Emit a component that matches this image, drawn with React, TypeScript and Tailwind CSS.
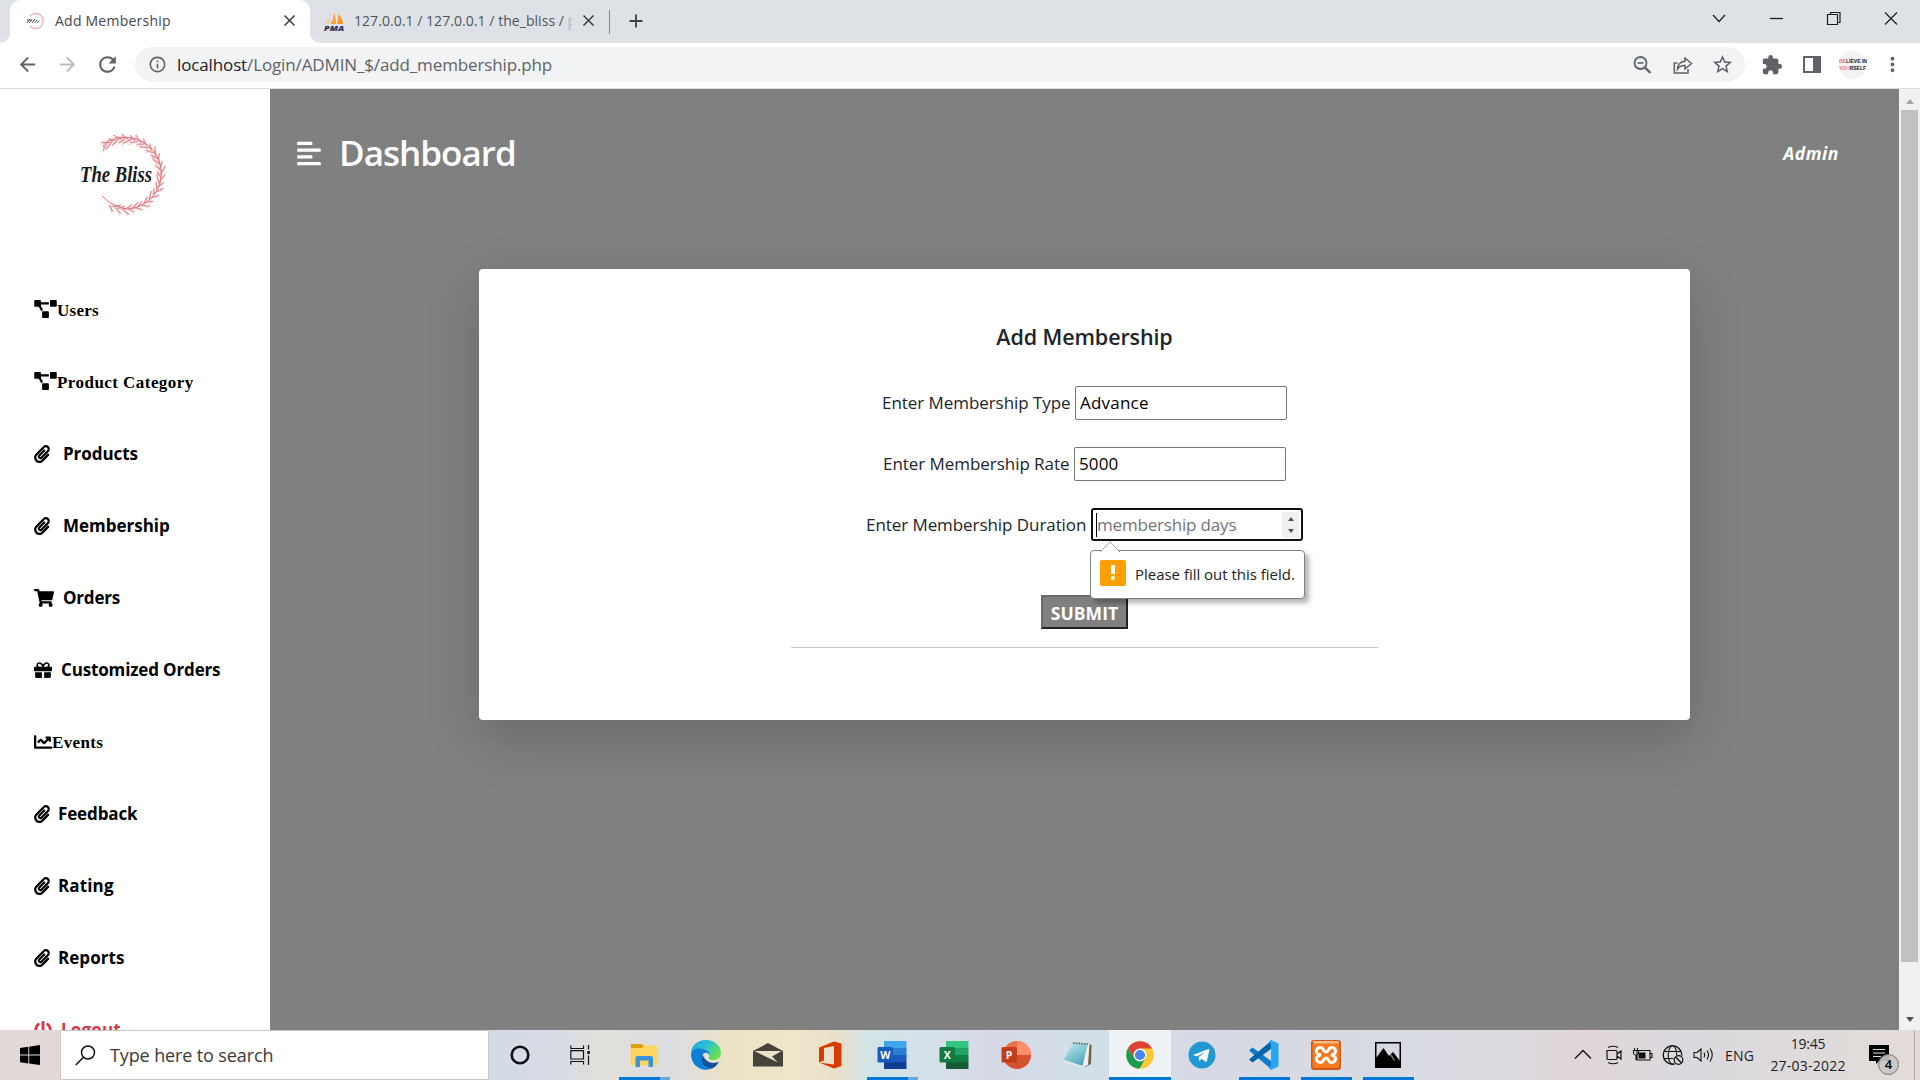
import React from "react";
import {
  FaAlignLeft,
  FaChartLine,
  FaGift,
  FaPaperclip,
  FaPowerOff,
  FaProjectDiagram,
  FaShoppingCart,
} from "react-icons/fa";
import {
  MdArrowBack,
  MdArrowForward,
  MdClose,
  MdAdd,
  MdExtension,
  MdInfoOutline,
  MdMoreVert,
  MdRefresh,
  MdStarBorder,
} from "react-icons/md";

/* ---------- Brand mark ---------- */

function Wreath() {
  const leaves = Array.from({ length: 46 }, (_, i) => {
    const a = ((-122 + i * 5.3) * Math.PI) / 180;
    const cx = 65 + 35.5 * Math.cos(a);
    const cy = 44 + 35 * Math.sin(a);
    const out = i % 2 === 0 ? -0.55 : 0.55;
    const len = 6.5 + (i % 3) * 1.2;
    const dir = a - Math.PI / 2 + out;
    return { x1: cx, y1: cy, x2: cx + len * Math.cos(dir), y2: cy + len * Math.sin(dir) };
  });
  return (
    <g stroke="#dd7076" fill="none" strokeLinecap="round">
      <path d="M43 17 Q45 11 52 10 A36 36 0 0 1 99 56 A36 36 0 0 1 68 79 Q54 78 42 66" strokeWidth="1" />
      {leaves.map((l, i) => (
        <g key={i}>
          <line x1={l.x1} y1={l.y1} x2={l.x2} y2={l.y2} strokeWidth="1.3" opacity=".75" />
          <line x1={l.x1 + 1.5} y1={l.y1 - 1} x2={l.x2 - 1} y2={l.y2 + 2} strokeWidth=".7" opacity=".6" />
        </g>
      ))}
    </g>
  );
}

function BlissLogo() {
  return (
    <svg viewBox="0 0 110 90" className="h-[90px] w-[110px] overflow-visible">
      <Wreath />
      <text
        x="20"
        y="52"
        textLength="72"
        lengthAdjust="spacingAndGlyphs"
        fill="#1b1b1b"
        fontFamily="'Brush Script MT','Liberation Serif',serif"
        fontStyle="italic"
        fontWeight="700"
        fontSize="24"
      >
        The Bliss
      </text>
    </svg>
  );
}

/* ---------- Browser frame ---------- */

function BlissFavicon() {
  return (
    <svg viewBox="0 0 20 20" className="h-5 w-5">
      <path d="M5 5 A7.5 7.5 0 1 1 5 15" fill="none" stroke="#eeb4b4" strokeWidth="1.4" />
      <path d="M2 12 L5 8 M4 12 L7 9 M7 12 L10 8 M9.500 12 L12 9 M12 12 L14 9.500 M2 9H7" stroke="#555" strokeWidth="1" />
    </svg>
  );
}

function PmaFavicon() {
  return (
    <svg viewBox="0 0 20 20" className="h-5 w-5 overflow-visible">
      <path d="M6 2 Q5 9 1 13 H6Z" fill="#f9cf96" />
      <path d="M10 1 Q10 8 6.500 13 H12 Q12 7 10 1Z" fill="#f7a12f" />
      <path d="M14 3 Q15 8 13 13 H19 Q19 8 14 3Z" fill="#f6992a" />
      <text x="0" y="19.500" textLength="20" lengthAdjust="spacingAndGlyphs" fontFamily="'Open Sans',sans-serif" fontStyle="italic" fontWeight="800" fontSize="7.5" fill="#2e2f57">
        PMA
      </text>
    </svg>
  );
}

function TabStrip() {
  return (
    <div className="flex h-[43px] items-stretch bg-[#dee1e6]">
      <div className="h-full w-[10px] bg-white">
        <div className="h-full rounded-br-[10px] bg-[#dee1e6]" />
      </div>
      <div className="flex w-[300px] items-center rounded-t-[10px] bg-white pb-[2px] pl-[15px] pr-[11px]">
        <BlissFavicon />
        <span className="ml-[10px] flex-1 whitespace-nowrap text-[14px] tracking-[.23px] text-[#45484c]">Add Membership</span>
        <MdClose className="h-[19px] w-[19px] text-[#3c4043]" />
      </div>
      <div className="h-full w-[10px] bg-white">
        <div className="h-full rounded-bl-[10px] bg-[#dee1e6]" />
      </div>
      <div className="flex w-[289px] items-center pb-[2px] pl-[4px]">
        <PmaFavicon />
        <span className="ml-[10px] w-[218px] overflow-hidden whitespace-nowrap text-[14px] tracking-[.05px] text-[#50545a]">
          127.0.0.1 / 127.0.0.1 / the_bliss / <span className="opacity-30">p</span>
        </span>
        <MdClose className="ml-[7px] h-[19px] w-[19px] text-[#3c4043]" />
      </div>
      <div className="mt-[10px] h-6 w-px bg-[#85888c]" />
      <div className="flex w-[51px] items-center justify-center pb-[1px]">
        <MdAdd className="h-[22px] w-[22px] text-[#3c4043]" />
      </div>
      <div className="flex flex-1 items-start justify-end pt-[8px]">
        <svg viewBox="0 0 200 20" className="mr-[18px] h-5 w-[200px]" fill="none" stroke="#1d1d1d" strokeWidth="1.2">
          <path d="M11 7 L17 13.500 L23 7" />
          <path d="M68 10.500 H81" strokeWidth="1.300" />
          <path d="M125.500 6.500 h10 v10 h-10z M128.500 6.500 v-2 h9.500 v10 h-2.500" />
          <path d="M183 4.500 L195 16.500 M195 4.500 L183 16.500" />
        </svg>
      </div>
    </div>
  );
}

function Toolbar() {
  return (
    <div className="flex h-[46px] items-center border-b border-[#d9dbde] bg-white pb-[2px] text-[#5f6368]">
      <div className="flex w-[135px] items-center pl-[16px]">
        <MdArrowBack className="h-[23px] w-[23px]" />
        <MdArrowForward className="ml-[17px] h-[23px] w-[23px] text-[#bbbdc0]" />
        <MdRefresh className="ml-[16px] h-[25px] w-[25px]" />
      </div>
      <div className="flex h-[35px] w-[1610px] items-center rounded-full bg-[#f1f3f4] pl-[13px] pr-[11px]">
        <MdInfoOutline className="h-[19px] w-[19px]" />
        <span className="ml-[10px] flex-1 whitespace-nowrap pt-px text-[17px] tracking-[-.13px]">
          <span className="text-[#202124]">localhost</span>/Login/ADMIN_$/add_membership.php
        </span>
        <svg viewBox="0 0 20 20" className="h-5 w-5" fill="none" stroke="currentColor" strokeWidth="1.8">
          <circle cx="7.500" cy="8" r="6" />
          <path d="M4.500 8 H10.500" strokeWidth="1.600" />
          <path d="M12 12.500 L17.500 18" strokeWidth="2.400" />
        </svg>
        <svg viewBox="0 0 20 20" className="ml-[20px] h-5 w-5" fill="none" stroke="currentColor" strokeWidth="1.500">
          <path d="M4.500 8 H1.300 V18 H15 V14" />
          <path d="M4.500 14 Q5 7 12 6.300 V3 L18.500 8.500 L12 14 V10.500 Q7 10.300 4.500 14Z" />
        </svg>
        <MdStarBorder className="ml-[18px] h-[23px] w-[23px]" />
      </div>
      <MdExtension className="ml-[16px] h-[22px] w-[22px]" />
      <div className="ml-[20px] flex h-[17px] w-[18px] border-2 border-[#5f6368]">
        <div className="ml-auto h-full w-[6px] bg-[#5f6368]" />
      </div>
      <div className="ml-[18px] flex h-7 w-7 flex-col items-center justify-center rounded-full bg-[#f3f3f3]">
        <svg viewBox="0 0 28 16" className="h-4 w-7 overflow-visible" fontFamily="'Liberation Sans',sans-serif" fontSize="6.200" fontWeight="700">
          <text x="0" y="6" textLength="28" lengthAdjust="spacingAndGlyphs" fill="#222">
            <tspan fill="#ee6a9a">BE</tspan>LIEVE IN
          </text>
          <text x="0" y="13.200" textLength="27" lengthAdjust="spacingAndGlyphs" fill="#222">
            <tspan fill="#ee6a9a">YOU</tspan>RSELF
          </text>
        </svg>
      </div>
      <MdMoreVert className="ml-[14px] h-[23px] w-[23px]" />
    </div>
  );
}

/* ---------- Admin page ---------- */

const serif = "font-['Liberation_Serif',serif] font-bold pt-px";
const sans = "font-bold";

const navItems = [
  { label: "Users", icon: <FaProjectDiagram className="mb-[2px] h-[18px] w-[23px]" />, text: `${serif} tracking-[.25px]`, color: "text-black" },
  { label: "Product Category", icon: <FaProjectDiagram className="mb-[2px] h-[18px] w-[23px]" />, text: `${serif} tracking-[.45px]`, color: "text-black" },
  { label: "Products", icon: <FaPaperclip className="mb-px h-[18px] w-[16px]" />, text: `${sans} tracking-[-.07px] ml-[13px]`, color: "text-black" },
  { label: "Membership", icon: <FaPaperclip className="mb-px h-[18px] w-[16px]" />, text: `${sans} tracking-[-.01px] ml-[13px]`, color: "text-black" },
  { label: "Orders", icon: <FaShoppingCart className="mb-px h-[18px] w-[20px]" />, text: `${sans} tracking-[-.19px] ml-[9px]`, color: "text-black" },
  { label: "Customized Orders", icon: <FaGift className="mb-px h-[18px] w-[18px]" />, text: `${sans} tracking-[-.15px] ml-[9px]`, color: "text-black" },
  { label: "Events", icon: <FaChartLine className="mb-px h-[18px] w-[18px]" />, text: `${serif} tracking-[.35px]`, color: "text-black" },
  { label: "Feedback", icon: <FaPaperclip className="mb-px h-[18px] w-[16px]" />, text: `${sans} tracking-[-.13px] ml-[8px]`, color: "text-black" },
  { label: "Rating", icon: <FaPaperclip className="mb-px h-[18px] w-[16px]" />, text: `${sans} tracking-[.14px] ml-[8px]`, color: "text-black" },
  { label: "Reports", icon: <FaPaperclip className="mb-px h-[18px] w-[16px]" />, text: `${sans} tracking-[.04px] ml-[8px]`, color: "text-black" },
  { label: "Logout", icon: <FaPowerOff className="mb-px h-[18px] w-[18px]" />, text: `${sans} tracking-[.16px] ml-[9px]`, color: "text-[#dc3545]" },
];

function Sidebar() {
  return (
    <aside className="h-full w-[270px] shrink-0 overflow-hidden bg-white">
      <div className="flex h-[185px] pl-[60px] pt-[41px]">
        <BlissLogo />
      </div>
      <nav>
        {navItems.map((n) => (
          <a key={n.label} className={`flex h-[72px] items-center pl-[34px] text-[17px] leading-6 ${n.color}`}>
            {n.icon}
            <span className={`whitespace-nowrap ${n.text}`}>{n.label}</span>
          </a>
        ))}
      </nav>
    </aside>
  );
}

function ValidationBubble() {
  return (
    <div className="absolute left-[-3px] top-[40px] z-10 flex h-[49px] w-[215px] items-center rounded-[4px] border border-[#808080] bg-white pl-[9px] shadow-[4px_4px_5px_rgba(0,0,0,0.3)]">
      <svg viewBox="0 0 20 11" className="absolute left-[9px] top-[-10px] h-[11px] w-5">
        <path d="M0 11 L10 0.800 L20 11" fill="#fff" stroke="#a0a0a0" strokeWidth="1" />
      </svg>
      <div className="mb-[3px] flex h-[26px] w-[26px] flex-col items-center rounded-[2px] bg-[#ffa000] pt-[5px]">
        <div className="h-[9px] w-[4px] bg-white" />
        <div className="mt-[2px] h-[4px] w-[4px] rounded-full bg-white" />
      </div>
      <span className="ml-[9px] whitespace-nowrap text-[15px] tracking-[-.02px] text-[#222]">Please fill out this field.</span>
    </div>
  );
}

function MembershipCard() {
  return (
    <section className="ml-[209px] h-[451px] w-[1211px] rounded-[4px] bg-white pt-[53px] text-[#212529] shadow-[0_18px_54px_rgba(0,0,0,0.175)]">
      <h5 className="h-[30px] text-center text-[21.500px] font-semibold leading-[30px] tracking-[-.11px]">Add Membership</h5>
      <form className="mt-[34px] flex flex-col items-center text-[17px]">
        <label className="flex h-[34px] items-center whitespace-nowrap">
          <span className="w-[193px] tracking-[-.06px]">Enter Membership Type</span>
          <span className="flex h-[34px] w-[212px] items-center rounded-[2px] border border-[#767676] pl-[4px] tracking-[.22px] text-black">Advance</span>
        </label>
        <label className="mt-[27px] flex h-[34px] items-center whitespace-nowrap">
          <span className="w-[191px] tracking-[-.05px]">Enter Membership Rate</span>
          <span className="flex h-[34px] w-[212px] items-center rounded-[2px] border border-[#767676] pl-[4px] tracking-[.11px] text-black">5000</span>
        </label>
        <label className="mt-[27px] flex h-[34px] items-center whitespace-nowrap">
          <span className="w-[225px] tracking-[-.07px]">Enter Membership Duration</span>
          <span className="relative mb-px flex h-[33px] w-[212px] items-center rounded-[3px] border-2 border-[#101010] pl-[3px] pr-[2px] tracking-[-.18px]">
            <span className="h-[24px] w-px bg-black" />
            <span className="flex-1 pt-px text-[#757575]">membership days</span>
            <span className="flex h-[26px] w-[17px] flex-col items-center justify-center gap-[8px] bg-[#f0f0f0]">
              <span className="h-0 w-0 border-x-[3.500px] border-b-[4px] border-x-transparent border-b-[#505050]" />
              <span className="h-0 w-0 border-x-[3.500px] border-t-[4px] border-x-transparent border-t-[#505050]" />
            </span>
            <ValidationBubble />
          </span>
        </label>
        <button
          type="button"
          className="mt-[53px] flex h-[34px] w-[87px] items-center justify-center border-2 border-b-[#212121] border-l-[#6b6b6b] border-r-[#212121] border-t-[#6b6b6b] bg-[#808080] pt-[2px] text-[17.500px] font-bold tracking-[.1px] text-white"
        >
          SUBMIT
        </button>
      </form>
      <div className="mx-auto mt-[18px] h-px w-[587px] bg-[#c8c8c9]" />
    </section>
  );
}

function Scrollbar() {
  return (
    <div className="flex w-[21px] shrink-0 flex-col items-center bg-[#f1f1f1]">
      <div className="flex h-[21px] items-center pt-[3px]">
        <div className="h-0 w-0 border-x-[4.500px] border-b-[5px] border-x-transparent border-b-[#a3a3a3]" />
      </div>
      <div className="h-[852px] w-[17px] bg-[#c1c1c1]" />
      <div className="mt-auto flex h-[21px] items-center">
        <div className="h-0 w-0 border-x-[4.500px] border-t-[5px] border-x-transparent border-t-[#505050]" />
      </div>
    </div>
  );
}

/* ---------- Taskbar ---------- */

type SlotProps = { children: React.ReactNode; mark?: "open" | "multi" | "active" };

function Slot({ children, mark }: SlotProps) {
  return (
    <div className={`flex h-full w-[62px] flex-col items-center ${mark === "active" ? "bg-white/60" : ""}`}>
      <div className="flex h-[47px] items-center pt-[3px]">{children}</div>
      {mark === "active" && <div className="h-[3px] w-full bg-[#0078d7]" />}
      {mark === "open" && <div className="h-[3px] w-[51px] bg-[#0078d7]" />}
      {mark === "multi" && (
        <div className="flex h-[3px] w-[51px]">
          <div className="w-[41px] bg-[#0078d7]" />
          <div className="w-[10px] bg-[#62aae6]" />
        </div>
      )}
    </div>
  );
}

function OfficeTile({ letter, tones, plate }: { letter: string; tones: string[]; plate: string }) {
  return (
    <svg viewBox="0 0 30 30" className="h-[30px] w-[30px]">
      {tones.map((t, i) => (
        <rect key={i} x="7" y={1 + i * 7} width="22.500" height="7" fill={t} />
      ))}
      <rect x=".5" y="7" width="15.500" height="15.500" rx="1.500" fill={plate} />
      <text x="8.300" y="18.500" textAnchor="middle" fontFamily="'Open Sans',sans-serif" fontWeight="700" fontSize="10.500" fill="#fff">
        {letter}
      </text>
    </svg>
  );
}

function Taskbar() {
  return (
    <footer className="flex h-[50px] items-stretch bg-[linear-gradient(90deg,#e2d9d8_0px,#e0dad9_300px,#d3dbe6_490px,#d8dce5_560px,#e2dfdb_605px,#dbdde2_670px,#ece2c6_730px,#eee5cb_800px,#e8e0c9_835px,#d3e3e6_870px,#d5e0ea_940px,#d6dae6_985px,#d2dfe8_1090px,#d7dae4_1200px,#dadbe1_1500px,#e1d6da_1580px,#dbd9de_1690px,#e2dbd8_1900px)]">
      <div className="flex w-[60px] items-center justify-center">
        <svg viewBox="0 0 20 20" className="h-5 w-5" fill="#000">
          <path d="M0 3 L8.300 1.800 V9.600 H0Z M9.200 1.700 L20 0 V9.600 H9.200Z M0 10.500 H8.300 V18.400 L0 17.200Z M9.200 10.500 H20 V20 L9.200 18.500Z" />
        </svg>
      </div>
      <div className="flex w-[429px] items-center border border-[#c8c8c8] bg-white pl-[14px]">
        <svg viewBox="0 0 21 21" className="h-[21px] w-[21px]" fill="none" stroke="#111" strokeWidth="1.500">
          <circle cx="13" cy="7.500" r="6.500" />
          <path d="M8.400 12.200 L.8 20" />
        </svg>
        <span className="ml-[14px] text-[18px] tracking-[-.12px] text-[#3a3a3a]">Type here to search</span>
      </div>

      <Slot>
        <svg viewBox="0 0 20 20" className="h-5 w-5"><circle cx="10" cy="10" r="8.300" fill="none" stroke="#111" strokeWidth="2.600" /></svg>
      </Slot>
      <Slot>
        <svg viewBox="0 0 20 20" className="-ml-[4px] h-5 w-5" fill="none" stroke="#111" strokeWidth="1.200">
          <path d="M.8 .5 V3.500 H13.500 V.5 M.8 5.700 H13.500 V14 H.8Z M.8 19.500 V16.500 H13.500 V19.500 M18.500 0 V4.500 M18.500 10.500 V20" />
          <rect x="17.300" y="6" width="2.500" height="3" fill="#111" stroke="none" />
        </svg>
      </Slot>
      <Slot mark="multi">
        <svg viewBox="0 0 28 25" className="h-[25px] w-7">
          <path d="M1 1 H12 L14 3.500 L12 6 H1Z" fill="#e09f09" />
          <path d="M.5 5 H12 L14 2.500 H27.500 V20 Q27.500 22.500 25 22.500 H3 Q.5 22.500 .5 20Z" fill="#ffd562" />
          <path d="M5.500 24 V15 Q5.500 13 7.500 13 H21 Q23 13 23 15 V24 H18.500 V17.500 H10 V24Z" fill="#3a93d8" />
        </svg>
      </Slot>
      <Slot>
        <svg viewBox="0 0 30 30" className="h-[30px] w-[30px]">
          <defs>
            <linearGradient id="edgeTop" x1="0" y1="0" x2="1" y2="0.600">
              <stop offset="0" stopColor="#1b9de0" />
              <stop offset=".5" stopColor="#2bc3d2" />
              <stop offset="1" stopColor="#69e04b" />
            </linearGradient>
          </defs>
          <path d="M0 14 C0 5 7 0 15 0 C24 0 30 6 30 13 C30 18 26 20 22 20 C18 20 17 18.500 18.500 16.500 C20 13 17 10 12 9 C6 8 1 11 0 14Z" fill="url(#edgeTop)" />
          <path d="M0 14 C2 8.500 8 7.500 12 9 C17 10 20 13 18.500 16 C18 11.500 12 11.500 10.800 17 C10 23 15 28 21 28.500 C10 33 0 25 0 14Z" fill="#0c7fd6" />
          <path d="M11.500 14.500 C8 22 14 28.500 21 28.500 C24 27 27 24 28 21.500 C22 25 14 22 11.500 14.500Z" fill="#12529b" />
        </svg>
      </Slot>
      <Slot>
        <svg viewBox="0 0 30 24" className="h-6 w-[30px]">
          <path d="M0 8 L15 0 L30 8 V23.500 H0Z" fill="#45443c" />
          <path d="M1.500 8 H28.500 L19 13.500 L25 19.500Z" fill="#ece2c8" />
        </svg>
      </Slot>
      <Slot>
        <svg viewBox="0 0 24 28" className="h-7 w-6">
          <path d="M1 6.500 L16 .5 L23.500 2.500 V25 L16 27.500 L1 21.500 L16 23.500 V5 L6 7 V19.500 L1 21.500Z" fill="#d83b01" />
        </svg>
      </Slot>
      <Slot mark="multi"><OfficeTile letter="W" tones={["#41a5ee", "#2b7cd3", "#185abd", "#103f91"]} plate="#185abd" /></Slot>
      <Slot><OfficeTile letter="X" tones={["#33c481", "#21a366", "#107c41", "#185c37"]} plate="#107c41" /></Slot>
      <Slot>
        <svg viewBox="0 0 30 30" className="h-[30px] w-[30px]">
          <circle cx="16" cy="15" r="14" fill="#ed6c47" />
          <path d="M16 1 A14 14 0 0 1 30 15 H16Z" fill="#ff8f6b" />
          <path d="M30 15 A14 14 0 0 1 3 20 L16 15Z" fill="#d35230" />
          <rect x=".5" y="7" width="15.500" height="15.500" rx="1.500" fill="#c43e1c" />
          <text x="8" y="18.500" textAnchor="middle" fontFamily="'Open Sans',sans-serif" fontWeight="700" fontSize="10.500" fill="#fff">P</text>
        </svg>
      </Slot>
      <Slot>
        <svg viewBox="0 0 30 28" className="h-7 w-[30px]">
          <defs>
            <linearGradient id="note" x1="0" y1="0" x2="0.600" y2="1">
              <stop offset="0" stopColor="#c9edf2" />
              <stop offset="1" stopColor="#4fa9bb" />
            </linearGradient>
          </defs>
          <path d="M24 2 L28.500 4 L28 23 L22 26Z" fill="#6e6350" />
          <path d="M24 2 L26.500 3 L25 24 L20 26Z" fill="#f2efe6" />
          <path d="M10 1.500 L25 2.500 L19.500 25 L1 19Z" fill="url(#note)" />
          <path d="M1 19 L19.500 25 L20 27 L1 21Z" fill="#dfe8ea" />
          <path d="M10 2 L25 3" stroke="#555" strokeWidth="1.500" strokeDasharray="1.500 1.300" />
        </svg>
      </Slot>
      <Slot mark="active">
        <svg viewBox="0 0 28 28" className="h-7 w-7">
          <circle cx="14" cy="14" r="13.800" fill="#fbc833" />
          <path d="M2.050 7.100 A13.800 13.800 0 0 0 13.500 27.800 L19.500 17.200 L14 14 L8.500 17.200Z" fill="#179c52" />
          <path d="M2.050 7.100 L8.500 17.200 L14 14 V7.500 H26 A13.800 13.800 0 0 0 2.050 7.100Z" fill="#dc4437" />
          <circle cx="14" cy="14" r="6.500" fill="#fff" />
          <circle cx="14" cy="14" r="5.100" fill="#4a85f0" />
        </svg>
      </Slot>
      <Slot>
        <svg viewBox="0 0 28 28" className="h-7 w-7">
          <circle cx="14" cy="14" r="13.500" fill="#2298d2" />
          <path d="M5.500 13.800 L20.500 8 Q21.700 7.700 21.300 9.200 L18.900 20 Q18.500 21.200 17.300 20.500 L13.600 17.800 L11.700 19.700 Q11 20 11 19 L10.800 15.900 L17.800 10.500 L9.300 15.300 L5.700 14.500Z" fill="#fff" />
        </svg>
      </Slot>
      <Slot mark="open">
        <svg viewBox="0 0 30 30" className="h-[30px] w-[30px]">
          <path d="M3.500 7.500 L0 10.500 L22 29 V21Z" fill="#0a7bc6" />
          <path d="M3.500 22.500 L0 19.500 L22 1 V9Z" fill="#0065a9" />
          <path d="M22 0 L29.500 3.500 V26.500 L22 30 L20 28.500 L22 25 V5 L20 1.500Z" fill="#25a8f3" />
        </svg>
      </Slot>
      <Slot mark="open">
        <svg viewBox="0 0 30 30" className="h-[30px] w-[30px]">
          <rect width="30" height="30" rx="3" fill="#cc5a14" />
          <rect x="1.500" y="3" width="27" height="25" rx="2" fill="#f47a20" />
          <rect x="2" y="1" width="26" height="2.500" rx="1" fill="#f6b98a" />
          <path
            d="M10 15 C3.500 14 4.500 7.500 9.500 7.500 C13 7.500 12 12 15 12 C18 12 17 7.500 20.500 7.500 C25.500 7.500 26.500 14 20 15 C26.500 16 25.500 22.500 20.500 22.500 C17 22.500 18 18 15 18 C12 18 13 22.500 9.500 22.500 C4.500 22.500 3.500 16 10 15Z"
            fill="none"
            stroke="#fff"
            strokeWidth="3"
          />
        </svg>
      </Slot>
      <Slot mark="open">
        <svg viewBox="0 0 26 26" className="h-[26px] w-[26px]">
          <rect x=".75" y=".75" width="24.500" height="24.500" fill="#d6d8e1" stroke="#000" strokeWidth="1.500" />
          <path d="M1 16 L8.500 6 L14 14 L18 10 L25 19 V25 H1Z" fill="#000" />
          <path d="M15.500 12.500 L19.500 18.500" stroke="#999" strokeWidth="1.200" />
        </svg>
      </Slot>

      <div className="flex flex-1 items-center justify-end text-[14px] text-[#1d1d1d]">
        <svg viewBox="0 0 150 24" className="mr-[6px] h-6 w-[150px]" fill="none" stroke="#111" strokeWidth="1.300">
          <path d="M6 15.500 L14 7.500 L22 15.500" />
          <path d="M38 7.500 h9 q1 0 1 1 v7 q0 1 -1 1 h-8 q-1 0 -1 -1z M48 11 l4 -3 v8 l-4 -3 M39 4.500 q5.500 -2.500 10 0 M39 19.500 q5.500 2.500 10 0" strokeWidth="1.200" />
          <path d="M68 7.500 h13 v9.500 h-13z M81.500 10.500 h1.500 v4 h-1.500 M67 17 v-5 M64.500 7.500 h5 v3 q-2.500 3.500 -5 0z M65.500 5 v2.500 M68.500 5 v2.500" strokeWidth="1.100" />
          <rect x="69.500" y="9.500" width="7" height="6" fill="#111" stroke="none" />
          <circle cx="103.500" cy="12" r="9.300" />
          <ellipse cx="103.500" cy="12" rx="4.300" ry="9.300" strokeWidth="1.100" />
          <path d="M95 8.500 H112 M95 15.500 H105.500" strokeWidth="1.100" />
          <circle cx="109.500" cy="17" r="5.500" fill="#dbd9de" stroke="none" />
          <circle cx="109.500" cy="17" r="4.300" strokeWidth="1.200" />
          <path d="M106.500 14 L112.500 20" strokeWidth="1.200" />
          <path d="M125 9.500 h3 l4 -3.500 v12 l-4 -3.500 h-3z M135 9.500 q1.500 2.500 0 5 M138 7.500 q3 4.500 0 9 M141 5.500 q4.500 6.500 0 13" strokeWidth="1.100" />
        </svg>
        <span className="tracking-[.14px]">ENG</span>
        <div className="ml-[16px] flex w-[76px] flex-col items-center leading-[22.500px]">
          <span className="tracking-[-.27px]">19:45</span>
          <span className="tracking-[.22px]">27-03-2022</span>
        </div>
        <div className="relative ml-[23px] mr-[25px] h-5 w-5">
          <svg viewBox="0 0 20 20" className="h-5 w-5">
            <path d="M0 0 H20 V16 H10 L7 19 V16 H0Z" fill="#000" />
            <path d="M4 4.500 H16 M4 8 H16 M4 11.500 H12" stroke="#ddd" strokeWidth="1.200" />
          </svg>
          <div className="absolute left-[9px] top-[9px] flex h-[21px] w-[21px] items-center justify-center rounded-full border border-[#777] bg-[#c9c5c5]/90 text-[13px] font-semibold leading-none text-black">
            4
          </div>
        </div>
        <div className="mr-[5px] h-full w-px bg-[#b5b0b0]" />
      </div>
    </footer>
  );
}

export default function App() {
  return (
    <div className="flex h-[1080px] w-[1920px] flex-col overflow-hidden font-['Open_Sans',sans-serif]">
      <TabStrip />
      <Toolbar />
      <div className="flex h-[941px] shrink-0 bg-[#808080]">
        <Sidebar />
        <main className="flex-1">
          <header className="flex h-[180px] items-start pl-[27px] pr-[60px] pt-[44px] text-white">
            <div className="flex h-10 items-center">
              <FaAlignLeft className="h-[27px] w-[24px]" />
              <h2 className="ml-[18px] text-[35px] font-semibold leading-10 tracking-[-.98px]">Dashboard</h2>
            </div>
            <div className="ml-auto flex h-10 items-center text-[17.500px] font-bold italic tracking-[.55px]">Admin</div>
          </header>
          <MembershipCard />
        </main>
        <Scrollbar />
      </div>
      <Taskbar />
    </div>
  );
}
